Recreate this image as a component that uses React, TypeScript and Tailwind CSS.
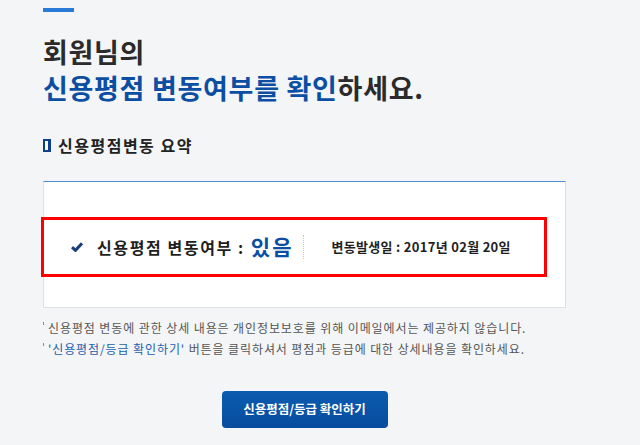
const font = { fontFamily: '"Noto Sans CJK KR", "Noto Sans", sans-serif' };

const BookIcon = () => (
  <svg width="8" height="13" viewBox="0 0 8 13" className="mr-[7px] shrink-0">
    <rect x="0" y="0" width="8" height="13" fill="#0c3f8c" />
    <rect x="2" y="2" width="3" height="9" fill="#ffffff" />
  </svg>
);

const CheckIcon = () => (
  <svg width="12" height="10" viewBox="0 0 12 10" className="shrink-0">
    <path d="M1 5.2 L4.4 8.4 L11 1.4" fill="none" stroke="#1b3f7c" strokeWidth="3" strokeLinejoin="round" />
  </svg>
);

const Bullet = () => <span className="inline-block w-[1px] h-[3px] bg-[#888] align-top mt-[5px] mr-[4px]" />;

const App: React.FC = () => {
  return (
    <main className="min-h-[445px] bg-[#f4f5f7] pl-[43px] pt-[8px]" style={font}>
      <div className="w-[523px] flex flex-col">
        <div className="w-[31px] h-[4px] bg-[#2a7bd8]" />

        <h1 className="mt-[22px] text-[27px] leading-[36px] font-bold tracking-[0.7px] text-[#2b2b2b]">
          회원님의
          <br />
          <span className="text-[#0b4ea2]">신용평점 변동여부를 확인</span>하세요.
        </h1>

        <h2 className="mt-[27px] flex items-center text-[16px] leading-[24px] font-bold tracking-[1.5px] text-[#222]">
          <BookIcon />
          신용평점변동 요약
        </h2>

        <section className="mt-[24px] bg-white border border-[#dde0e5] border-t-[#4b8fd8] pt-[35px] pb-[30px]">
          <div className="-ml-[3px] w-[506px] h-[60px] border-[3px] border-[#ff0000] flex items-center pl-[27px]">
            <CheckIcon />
            <span className="ml-[14px] text-[16px] font-bold tracking-[1.6px] text-[#1f1f1f]">신용평점 변동여부 :</span>
            <span className="ml-[6px] text-[21px] font-bold tracking-[2px] text-[#0b4ea2]">있음</span>
            <span className="ml-[10px] h-[24px] border-l border-dotted border-[#c8c8c8]" />
            <span className="ml-[27px] text-[13px] font-bold tracking-[0.3px] text-[#1f1f1f]">변동발생일 : 2017년 02월 20일</span>
          </div>
        </section>

        <ul className="mt-[9px] text-[12px] leading-[21px] tracking-[0.9px] text-[#555]">
          <li>
            <Bullet />
            신용평점 변동에 관한 상세 내용은 개인정보보호를 위해 이메일에서는 제공하지 않습니다.
          </li>
          <li>
            <Bullet />
            <span className="text-[#1c5fae]">'신용평점/등급 확인하기'</span> 버튼을 클릭하셔서 평점과 등급에 대한 상세내용을 확인하세요.
          </li>
        </ul>

        <div className="mt-[32px] flex justify-center">
          <button className="w-[166px] h-[37px] rounded-[4px] bg-gradient-to-b from-[#0b5cb0] to-[#084c9e] text-white text-[12.5px] font-bold">
            신용평점/등급 확인하기
          </button>
        </div>
      </div>
    </main>
  );
};

export default App;
